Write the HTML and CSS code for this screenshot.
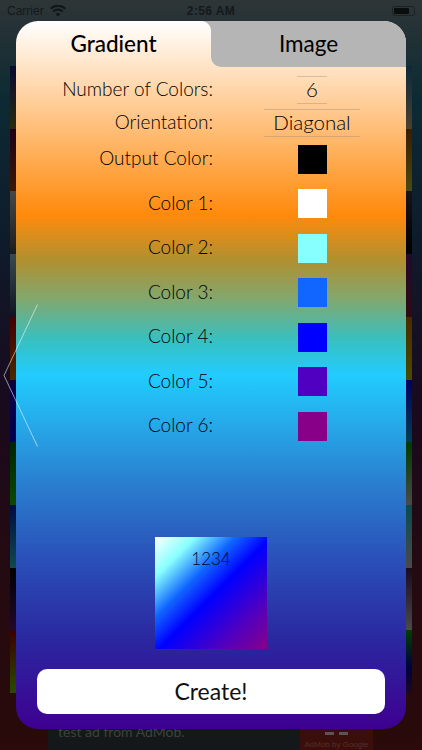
FILE: index.html
```html
<!DOCTYPE html>
<html lang="en">
<head>
<meta charset="utf-8">
<title>Gradient</title>
<link rel="stylesheet" href="styles.css">
</head>
<body>
<div class="stage">
  <div class="backdrop">
    <header class="status">
      <div class="status-left">
        <span>Carrier</span>
        <svg class="wifi" viewBox="0 0 16 12" width="16" height="12"><path d="M8 11.6 5.7 9a3.3 3.3 0 0 1 4.6 0zM3.9 7.2l-1.3-1.5a8 8 0 0 1 10.8 0l-1.3 1.5a6 6 0 0 0-8.2 0zM1.4 4.4 0 2.9a11.8 11.8 0 0 1 16 0l-1.4 1.5a9.8 9.8 0 0 0-13.2 0z"/></svg>
      </div>
      <span class="clock">2:56 AM</span>
      <div class="battery"><span class="battery-fill"></span></div>
    </header>
    <div class="cells">
      <i class="c l1"></i><i class="c r1"></i>
      <i class="c l2"></i><i class="c r2"></i>
      <i class="c l3"></i><i class="c r3"></i>
      <i class="c l4"></i><i class="c r4"></i>
      <i class="c l5"></i><i class="c r5"></i>
      <i class="c l6"></i><i class="c r6"></i>
      <i class="c l7"></i><i class="c r7"></i>
      <i class="c l8"></i><i class="c r8"></i>
      <i class="c l9"></i><i class="c r9"></i>
      <i class="c l10"></i><i class="c r10"></i>
    </div>
    <div class="ad">
      <div class="ad-copy">test ad from AdMob.</div>
      <div class="ad-brand">
        <div class="ad-mark"><span class="ad-bar"></span><span class="ad-bar"></span></div>
        <div>AdMob by Google</div>
      </div>
    </div>
  </div>

  <section class="panel">
    <div class="tabs">
      <div class="tab tab-on">Gradient</div>
      <div class="tab tab-off">Image</div>
    </div>
    <div class="form">
      <div class="row row-stepper">
        <span class="label">Number of Colors:</span>
        <span class="field field-small">6</span>
      </div>
      <div class="row row-picker">
        <span class="label">Orientation:</span>
        <span class="field">Diagonal</span>
      </div>
      <div class="row row-output">
        <span class="label">Output Color:</span>
        <span class="swatch s-black"></span>
      </div>
      <div class="row row-color">
        <span class="label">Color 1:</span>
        <span class="swatch s-white"></span>
      </div>
      <div class="row row-color">
        <span class="label">Color 2:</span>
        <span class="swatch s-aqua"></span>
      </div>
      <div class="row row-color">
        <span class="label">Color 3:</span>
        <span class="swatch s-sky"></span>
      </div>
      <div class="row row-color">
        <span class="label">Color 4:</span>
        <span class="swatch s-blue"></span>
      </div>
      <div class="row row-color">
        <span class="label">Color 5:</span>
        <span class="swatch s-indigo"></span>
      </div>
      <div class="row row-color">
        <span class="label">Color 6:</span>
        <span class="swatch s-purple"></span>
      </div>
    </div>
    <div class="preview">1234</div>
    <button class="create" type="button">Create!</button>
  </section>

  <svg class="chevron" viewBox="0 0 40 146" width="40" height="146"><path d="M37.5 .5 4 71.5l33.5 71"/></svg>
</div>
</body>
</html>
```
FILE: styles.css
```css
* { box-sizing: border-box; }
html, body { margin: 0; padding: 0; }
body { width: 422px; height: 750px; overflow: hidden; font-family: "Lato", "Liberation Sans", sans-serif; }

.stage { position: relative; width: 422px; height: 750px; overflow: hidden; }

.backdrop {
  height: 750px;
  display: flex;
  flex-direction: column;
  background: linear-gradient(180deg, #2e3537 0, #0c2a33 100px, #0f1a2a 250px, #190a1e 400px, #230a12 550px, #2a0a0a 750px);
}

.status {
  height: 21px;
  flex: none;
  display: grid;
  grid-template-columns: 1fr auto 1fr;
  align-items: center;
  padding: 1px 7px 0;
  font-family: "Liberation Sans", sans-serif;
  font-size: 12px;
  color: #14191b;
}
.status-left { display: flex; align-items: center; gap: 6px; }
.wifi { fill: #101517; }
.clock { font-weight: 700; letter-spacing: .4px; }
.battery {
  justify-self: end;
  width: 23px;
  height: 10px;
  padding: 1px;
  border: 1px solid #1c2225;
  border-radius: 3px;
  display: flex;
}
.battery-fill { width: 15px; background: #0a0d0e; border-radius: 1px; }

.cells {
  margin: 45px 10px 0;
  height: 627px;
  display: grid;
  grid-template-columns: 1fr 1fr;
  grid-template-rows: repeat(10, 1fr);
  flex: none;
}
.c { display: block; }
.l1 { background: linear-gradient(#0a0a30, #2a2a10); }
.r1 { background: linear-gradient(#0a2a3a, #4a4030); }
.l2 { background: linear-gradient(#200015, #3a1a05); }
.r2 { background: linear-gradient(#3a1c00, #4a4a10); }
.l3 { background: linear-gradient(#484848, #1c1c1c); }
.r3 { background: linear-gradient(#151515, #000); }
.l4 { background: linear-gradient(#3a4a50, #111420); }
.r4 { background: linear-gradient(#200a30, #300a10); }
.l5 { background: linear-gradient(#450000, #4a2a00); }
.r5 { background: linear-gradient(#4a2a00, #4a4a00); }
.l6 { background: linear-gradient(#0a0040, #000050); }
.r6 { background: linear-gradient(#000060, #004050); }
.l7 { background: linear-gradient(#002200, #0a4a05); }
.r7 { background: linear-gradient(#003a00, #4a4a4a); }
.l8 { background: linear-gradient(#000a40, #104a50); }
.r8 { background: linear-gradient(#0a4a50, #4a4a4a); }
.l9 { background: linear-gradient(#000, #200a30); }
.r9 { background: linear-gradient(#1a0a20, #4a4a4a); }
.l10 { background: linear-gradient(#3a0000, #2a4a00); }
.r10 { background: linear-gradient(#004000, #000040 60%, #1a0a20); }

.ad {
  margin: auto 0 0 48px;
  width: 325px;
  height: 57px;
  display: flex;
  background: #14181b;
  color: #3c4144;
}
.ad-copy { flex: 1; padding: 29px 0 0 10px; font-size: 14px; line-height: 20px; }
.ad-brand {
  width: 73px;
  background: #3a0e0a;
  color: #55302a;
  font-family: "Liberation Sans", sans-serif;
  font-size: 8px;
  line-height: 10px;
  text-align: center;
  padding-top: 39px;
}
.ad-mark { height: 3px; margin-bottom: 5px; display: flex; justify-content: center; gap: 5px; }
.ad-bar { width: 9px; height: 3px; background: #5c5452; }

.panel {
  position: absolute;
  left: 16px;
  top: 21px;
  width: 390px;
  height: 708px;
  border-radius: 22px;
  overflow: hidden;
  display: flex;
  flex-direction: column;
  align-items: center;
  padding-bottom: 15px;
  color: #000;
  background: linear-gradient(180deg, #fff 0, #ff8a0c 27.4%, #b09030 33.8%, #80a870 39.4%, #38c0c0 45%, #22ccff 50%, #2a80d0 65%, #2a50b8 76%, #2a28a0 87%, #3e0090 100%);
}

.tabs { width: 100%; height: 46px; flex: none; display: grid; grid-template-columns: 1fr 1fr; }
.tab { font-size: 22.5px; line-height: 46px; text-align: center; }
.tab-on { font-weight: 500; }
.tab-off {
  position: relative;
  background: #b5b5b5;
  border-bottom-left-radius: 10px;
}
.tab-off::before {
  content: "";
  position: absolute;
  left: -10px;
  top: 0;
  width: 10px;
  height: 10px;
  background: radial-gradient(circle at 0 100%, transparent 9.5px, #b5b5b5 10.5px);
}

.form { width: 100%; padding-top: 9px; display: flex; flex-direction: column; }
.row { display: grid; grid-template-columns: 197px 96px; column-gap: 51px; align-items: center; font-size: 19px; font-weight: 300; }
.label { text-align: right; padding-bottom: 3px; }
.row-stepper { height: 27px; }
.row-picker { height: 28px; margin-top: 6px; }
.row-output { height: 29px; margin-top: 7.5px; }
.row-color { height: 29px; margin-top: 15.5px; }

.field {
  height: 100%;
  display: flex;
  align-items: center;
  justify-content: center;
  justify-self: center;
  width: 96px;
  padding-bottom: 2px;
  border-top: 1px solid rgba(120, 120, 120, .3);
  border-bottom: 1px solid rgba(120, 120, 120, .3);
  font-size: 20.5px;
  color: #000;
}
.field-small { width: 30px; }

.swatch { width: 29px; height: 29px; justify-self: center; display: block; }
.s-black { background: #000; }
.s-white { background: #fff; }
.s-aqua { background: #88ffff; }
.s-sky { background: #1166ff; }
.s-blue { background: #0000ff; }
.s-indigo { background: #5000c0; }
.s-purple { background: #880088; }

.preview {
  width: 112px;
  height: 112px;
  margin-top: auto;
  flex: none;
  padding-top: 12px;
  text-align: center;
  font-size: 17px;
  font-weight: 300;
  line-height: 20px;
  color: #000a30;
  background: linear-gradient(135deg, #fff 0, #88ffff 18%, #1166ff 36%, #0000ff 52%, #5000c0 78%, #880088 100%);
}

.create {
  width: 348px;
  height: 45px;
  margin-top: 20px;
  flex: none;
  border: 0;
  border-radius: 10px;
  background: #fff;
  color: #111;
  padding: 0 0 2px;
  font: 23px "Lato", "Liberation Sans", sans-serif;
}

.chevron { position: absolute; left: 0; top: 304px; fill: none; stroke: rgba(255, 255, 255, .55); stroke-width: 1; }
```
